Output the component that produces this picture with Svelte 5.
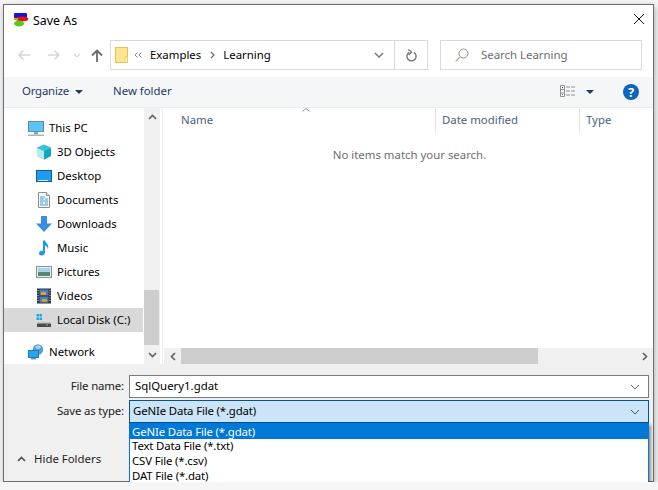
<script>
  const tree = [
    { label: 'Desktop', icon: 'desktop' },
    { label: 'Documents', icon: 'documents' },
    { label: 'Downloads', icon: 'downloads' },
    { label: 'Music', icon: 'music' },
    { label: 'Pictures', icon: 'pictures' },
    { label: 'Videos', icon: 'videos' }
  ];
  const types = ['GeNIe Data File (*.gdat)', 'Text Data File (*.txt)', 'CSV File (*.csv)', 'DAT File (*.dat)'];
</script>

{#snippet icon(name)}
  <svg class="ico" viewBox="0 0 16 16" width="16" height="16">
    {#if name === 'pc'}
      <rect x="0.5" y="1.500" width="15" height="10" fill="#5cc3f5" stroke="#5d8fb0"/>
      <rect x="6" y="12" width="4" height="2.500" fill="#8aa4b5"/>
      <rect x="0" y="14.500" width="16" height="1.500" fill="#a9b5bf"/>
    {:else if name === 'cube'}
      <path d="M8 0.500 15 3.500V12L8 15.500 1 12V3.500Z" fill="#38c0d6"/>
      <path d="M1 4 8 7V15.500L1 12Z" fill="#b5ecef"/>
      <path d="M8 7 15 4V12L8 15.500Z" fill="#14a3c4"/>
    {:else if name === 'desktop'}
      <rect x="0.5" y="2.500" width="15" height="11" fill="#1f9cf0" stroke="#0f5f9f"/>
      <rect x="2" y="12" width="10" height="1" fill="#d8f0ff"/>
    {:else if name === 'documents'}
      <path d="M2.500 0.500H10.500L13.500 3.500V15.500H2.500Z" fill="#fff" stroke="#8a8f94"/>
      <path d="M10.500 .5V3.500H13.500" fill="#e4e4e4" stroke="#8a8f94"/>
      <path d="M4 5H9M4 7H8M9 7H12M4 9H12M4 11H7M9 11H12M4 13H12" stroke="#2f9bd7"/>
    {:else if name === 'downloads'}
      <path d="M5 0H11V7.500H16L8 16 0 7.500H5Z" fill="#3a8de0"/>
    {:else if name === 'music'}
      <path d="M7 0.500H9C9.500 3 13.500 4.500 12 9 11.500 6.500 10 6 9 5.500V12.500C9 14.500 7 15.500 5.500 15.500 3.500 15.500 3 14.200 3 13.200 3 11.500 5 10.300 7 11Z" fill="#1f97e8"/>
    {:else if name === 'pictures'}
      <rect x="0.5" y="2.500" width="15" height="11" fill="#e8eef2" stroke="#8a8f94"/>
      <rect x="2" y="4" width="12" height="4" fill="#a9d4e8"/>
      <rect x="2" y="8" width="12" height="4" fill="#4f8a6e"/>
    {:else if name === 'videos'}
      <rect x="1" y="0.500" width="14" height="15" fill="#333"/>
      <rect x="3.500" y="1.500" width="9" height="6" fill="#3f7fd0"/>
      <rect x="3.500" y="8.500" width="9" height="6" fill="#3f7fd0"/>
      <rect x="5" y="4" width="5" height="3" fill="#e8a020"/>
      <rect x="6" y="11" width="5" height="3" fill="#d8a020"/>
      <path d="M2 2V14M14 2V14" stroke="#ddd" stroke-dasharray="1 1.500"/>
    {:else if name === 'disk'}
      <path d="M0.500 2H3V4.500H0.500ZM3.500 2H6V4.500H3.500ZM0.500 5.500H3V8H0.500ZM3.500 5.500H6V8H3.500Z" fill="#19a7ec"/>
      <rect x="2" y="10" width="12" height="1.500" fill="#c4c4c4"/>
      <rect x="1" y="11.500" width="14" height="3.500" fill="#4a4a4a"/>
      <rect x="10" y="12.500" width="2" height="1" fill="#5fd35f"/>
    {:else if name === 'network'}
      <circle cx="10" cy="5.500" r="5.200" fill="#5b9dc9"/>
      <path d="M7 3c2-2 5-2 6 0-1 2-4 3-6 0Z" fill="#a9d5ee"/>
      <rect x="0.5" y="6.500" width="10" height="7" fill="#27a5ee" stroke="#177fbe"/>
      <rect x="3" y="14" width="5" height="1.500" fill="#7a98aa"/>
    {/if}
  </svg>
{/snippet}

<div class="window">
  <header class="titlebar">
    <svg class="appicon" viewBox="0 0 16 14" width="16" height="14">
      <rect x="1" y="0" width="13" height="5" rx="1" fill="#1414e0"/>
      <ellipse cx="9" cy="6" rx="6.500" ry="2.600" fill="#ee0f0f"/>
      <ellipse cx="6" cy="10.500" rx="5" ry="3" fill="#55cc1a"/>
      <rect x="1" y="5" width="4" height="2" fill="#caa020"/>
    </svg>
    <span class="title">Save As</span>
    <svg class="close" viewBox="0 0 10 10" width="10" height="10"><path d="M0 0 10 10M10 0 0 10" stroke="#111" stroke-width="1" fill="none"/></svg>
  </header>

  <nav class="navrow">
    <div class="arrows">
      <svg class="nb" viewBox="0 0 14 12" width="14" height="12"><path d="M13 6H2M6.500 1.500 2 6l4.500 4.500" fill="none" stroke="#d6d6d6" stroke-width="1.600"/></svg>
      <svg class="nb second" viewBox="0 0 14 12" width="14" height="12"><path d="M1 6H12M7.500 1.500 12 6l-4.500 4.500" fill="none" stroke="#d6d6d6" stroke-width="1.600"/></svg>
      <svg class="nb third" viewBox="0 0 8 5" width="8" height="5"><path d="M1 1 4 4 7 1" fill="none" stroke="#d6d6d6" stroke-width="1.200"/></svg>
      <svg class="nb fourth" viewBox="0 0 12 13" width="12" height="13"><path d="M6 13V2M1 6.500 6 1.500l5 5" fill="none" stroke="#6d6d6d" stroke-width="1.800"/></svg>
    </div>
    <div class="address">
      <svg class="folder" viewBox="0 0 13 16" width="13" height="16"><rect x="0.5" y="0.5" width="12" height="15" fill="#ffe58f" stroke="#e2c25c"/><rect x="10" y="10" width="2.500" height="5.500" fill="#fff1c0" stroke="#e2c25c" stroke-width="0.6"/></svg>
      <svg class="chev" viewBox="0 0 8 6" width="8" height="6"><path d="M3.500 .5 1 3l2.500 2.500M7.500 .5 5 3l2.500 2.500" fill="none" stroke="#8a8a8a"/></svg>
      <span class="tx">Examples</span>
      <svg class="crumb" viewBox="0 0 5 8" width="5" height="8"><path d="M1 1 4 4 1 7" fill="none" stroke="#777" stroke-width="1.400"/></svg>
      <span class="tx">Learning</span>
      <span class="spacer"></span>
      <svg class="dd" viewBox="0 0 10 6" width="10" height="6"><path d="M1 1 5 5 9 1" fill="none" stroke="#777" stroke-width="1.500"/></svg>
      <span class="sep">
        <svg viewBox="0 0 12 14" width="11" height="13"><path d="M3.500 3.500A5 5 0 1 0 8.500 3.500" fill="none" stroke="#777" stroke-width="1.500"/><path d="M2.500 0.500 6 3.200 3 6.500" fill="none" stroke="#777" stroke-width="1.500"/></svg>
      </span>
    </div>
    <div class="search">
      <svg viewBox="0 0 14 14" width="14" height="14"><circle cx="8.500" cy="5.500" r="4.500" fill="none" stroke="#8c8c8c"/><path d="M5 9 .7 13.300" stroke="#b6a58c" stroke-width="1.200"/></svg>
      <span class="tx">Search Learning</span>
    </div>
  </nav>

  <div class="toolbar">
    <span class="tool">Organize</span>
    <i class="caret"></i>
    <span class="tool newf">New folder</span>
    <span class="spacer"></span>
    <svg class="views" viewBox="0 0 16 12" width="16" height="12">
      <path d="M.5.5H4.500V11.500H.5ZM.5 4.500H4.500M.5 8H4.500" fill="#fff" stroke="#8a8f94"/>
      <path d="M6 2H16M6 6H16M6 10H16" stroke="#8a8f94" stroke-dasharray="4 1"/>
      <rect x="2" y="9" width="1" height="1" fill="#d33"/><rect x="2" y="2" width="1" height="1" fill="#33a"/>
    </svg>
    <i class="caret dark"></i>
    <span class="help">?</span>
  </div>

  <main class="content">
    <aside class="side">
      <div class="tree">
        <div class="row lvl0 first">{@render icon('pc')}<span class="tx">This PC</span></div>
        <div class="row lvl1">{@render icon('cube')}<span class="tx">3D Objects</span></div>
        {#each tree as t}
          <div class="row lvl1">{@render icon(t.icon)}<span class="tx">{t.label}</span></div>
        {/each}
        <div class="row lvl1 selected">{@render icon('disk')}<span class="tx">Local Disk (C:)</span></div>
        <div class="row lvl0 net">{@render icon('network')}<span class="tx">Network</span></div>
      </div>
      <div class="vscroll">
        <svg viewBox="0 0 9 6" width="9" height="6"><path d="M1 5 4.500 1.500 8 5" fill="none" stroke="#606060" stroke-width="1.600"/></svg>
        <div class="vtrack"><div class="vthumb"></div></div>
        <svg class="down" viewBox="0 0 9 6" width="9" height="6"><path d="M1 1 4.500 4.500 8 1" fill="none" stroke="#606060" stroke-width="1.600"/></svg>
      </div>
    </aside>
    <section class="files">
      <div class="head">
        <svg class="sort" viewBox="0 0 8 4" width="8" height="4"><path d="M.5 3.500 4 .5 7.500 3.500" fill="none" stroke="#909090"/></svg>
        <span class="col name">Name</span>
        <span class="col date">Date modified</span>
        <span class="col type">Type</span>
      </div>
      <p class="empty">No items match your search.</p>
      <div class="hscroll">
        <span class="hbtn"><svg viewBox="0 0 6 9" width="6" height="9"><path d="M5 1 1.500 4.500 5 8" fill="none" stroke="#606060" stroke-width="1.600"/></svg></span>
        <div class="htrack"><div class="hthumb"></div></div>
        <span class="hbtn"><svg viewBox="0 0 6 9" width="6" height="9"><path d="M1 1 4.500 4.500 1 8" fill="none" stroke="#606060" stroke-width="1.600"/></svg></span>
      </div>
    </section>
  </main>

  <footer class="footer">
    <div class="field">
      <label for="fname" class="tx">File name:</label>
      <div class="combo" id="fname">
        <span class="tx">SqlQuery1.gdat</span>
        <svg viewBox="0 0 10 6" width="10" height="6"><path d="M1 1 5 5 9 1" fill="none" stroke="#666" stroke-width="1"/></svg>
      </div>
    </div>
    <div class="field type-field">
      <label for="ftype" class="tx">Save as type:</label>
      <div class="combo active" id="ftype">
        <span class="tx tight">GeNIe Data File (*.gdat)</span>
        <svg viewBox="0 0 10 6" width="10" height="6"><path d="M1 1 5 5 9 1" fill="none" stroke="#555" stroke-width="1"/></svg>
        <ul class="menu">
          {#each types as t, i}
            <li class:hi={i === 0}>{t}</li>
          {/each}
        </ul>
      </div>
    </div>
    <div class="hide">
      <svg viewBox="0 0 9 6" width="9" height="6"><path d="M1 5 4.500 1.500 8 5" fill="none" stroke="#505050" stroke-width="1.600"/></svg>
      <span>Hide Folders</span>
    </div>
  </footer>
</div>

<style>
  :global(body) { margin: 0; background: #f6f6f6; }
  .window {
    box-sizing: border-box; width: 651px; height: 478px; margin: 4px 0 0 3px;
    display: flex; flex-direction: column; background: #fff;
    border: 1px solid #6e6e6e; box-shadow: 1px 2px 6px rgba(0,0,0,.3);
    font: 11.4px "Noto Sans", sans-serif; color: #000;
  }
  .tx { margin-bottom: 2px; }
  .titlebar { height: 30px; display: flex; align-items: center; padding: 0 9px 0 9px; flex: none; }
  .title { margin-left: 4px; font-size: 12.4px; }
  .close { margin-left: auto; margin-bottom: 2px; }
  .navrow { height: 40px; flex: none; display: flex; align-items: center; }
  .arrows { width: 106px; display: flex; align-items: center; padding-left: 13px; box-sizing: border-box; }
  .nb.second { margin-left: 16px; }
  .nb.third { margin-left: 12px; }
  .nb.fourth { margin-left: 10px; }
  .address {
    box-sizing: border-box; width: 318px; height: 30px; border: 1px solid #d9d9d9;
    display: flex; align-items: center; padding-left: 4px;
  }
  .folder { margin-right: 6px; }
  .chev { margin-right: 8px; }
  .crumb { margin: 0 8px 0 9px; }
  .spacer { flex: 1; }
  .dd { margin-right: 10px; }
  .sep { border-left: 1px solid #d9d9d9; height: 28px; width: 32px; display: flex; align-items: center; justify-content: center; }
  .search {
    box-sizing: border-box; width: 202px; height: 30px; margin-left: 12px; border: 1px solid #d9d9d9;
    display: flex; align-items: center; padding-left: 14px; gap: 12px; color: #6d6d6d;
  }
  .toolbar {
    height: 31px; flex: none; background: #f5f6f7; display: flex; align-items: center; padding: 0 14px 0 18px;
    border-bottom: 1px solid #ececec; box-sizing: border-box; margin-top: 2px; color: #1f3a63;
  }
  .tool { margin-bottom: 4px; }
  .tool:first-child { letter-spacing: -0.2px; }
  .caret { width: 0; height: 0; border: 4px solid transparent; border-top: 4px solid #1f3a63; border-bottom: 0; margin-left: 6px; }
  .newf { margin-left: 30px; }
  .views { margin: 0 10px 2px 0; }
  .caret.dark { margin: 0 29px 0 0; }
  .help {
    width: 16px; height: 16px; border-radius: 50%; background: #0a64c0; color: #fff; font-weight: 700;
    text-align: center; line-height: 16px; font-size: 13px;
  }
  .content { flex: 1; min-height: 0; display: flex; }
  .side { width: 156px; flex: none; display: flex; }
  .tree { width: 140px; padding-top: 8px; box-sizing: border-box; }
  .row { height: 24px; display: flex; align-items: center; gap: 5px; }
  .lvl0 { padding-left: 24px; }
  .lvl1 { padding-left: 32px; }
  .selected { background: #d9d9d9; width: 139px; box-sizing: border-box; }
  .net { margin-top: 8px; }
  .vscroll { width: 16px; background: #f0f0f0; display: flex; flex-direction: column; align-items: center; }
  .vscroll svg { flex: none; margin: 6px 0; }
  .vscroll .down { margin-top: 7px; }
  .vtrack { flex: 1; width: 15px; align-self: flex-start; display: flex; flex-direction: column; justify-content: flex-end; }
  .vthumb { height: 55px; background: #cdcdcd; }
  .files { flex: 1; min-width: 0; display: flex; flex-direction: column; margin-left: 2px; border-left: 1px solid #f0f0f0; }
  .head { height: 26px; flex: none; display: flex; color: #4c607a; position: relative; margin-left: 1px; }
  .sort { position: absolute; left: 138px; top: 0; }
  .col { display: block; box-sizing: border-box; padding-left: 6px; line-height: 23px; border-right: 1px solid #e5e5e5; }
  .col.name { width: 272px; padding-left: 17px; }
  .col.date { width: 144px; }
  .col.type { flex: 1; border: 0; }
  .empty { margin: 0; flex: 1; padding: 13px 0 0 3px; text-align: center; color: #6d6d6d; box-sizing: border-box; }
  .hscroll { height: 16px; flex: none; background: #f0f0f0; display: flex; align-items: center; margin-left: 1px; }
  .hbtn { width: 17px; display: flex; justify-content: center; flex: none; }
  .htrack { flex: 1; height: 100%; }
  .hthumb { width: 357px; height: 100%; background: #cdcdcd; }
  .footer { height: 117px; flex: none; background: #f0f0f0; position: relative; padding-top: 11px; box-sizing: border-box; }
  .field { display: flex; align-items: center; height: 23px; margin-bottom: 2px; }
  label { width: 120px; text-align: right; margin-right: 5px; flex: none; color: #1a1a1a; letter-spacing: -0.15px; }
  .combo {
    box-sizing: border-box; width: 520px; height: 23px; background: #fff; border: 1px solid #7a7a7a;
    display: flex; align-items: center; justify-content: space-between; padding: 0 8px 0 5px; position: relative;
  }
  .combo.active { background: #cce4f7; border-color: #005499; padding-left: 3px; }
  .tight { letter-spacing: -0.15px; }
  .menu {
    position: absolute; left: -1px; top: 22px; width: 520px; height: 62px; margin: 0; padding: 0; list-style: none; background: #fff;
    border: 1px solid #0078d7; border-top: 0; border-bottom-width: 2px; box-sizing: border-box; box-shadow: 2px 2px 3px rgba(0,0,0,.4); z-index: 2;
    letter-spacing: -0.15px; overflow: hidden;
  }
  .menu li { height: 15px; line-height: 14px; padding-left: 2px; }
  .menu li.hi { background: #0078d7; color: #fff; height: 16px; line-height: 17px; }
  .hide { position: absolute; left: 13px; top: 87px; display: flex; align-items: center; gap: 8px; color: #1e1e1e; }
</style>
